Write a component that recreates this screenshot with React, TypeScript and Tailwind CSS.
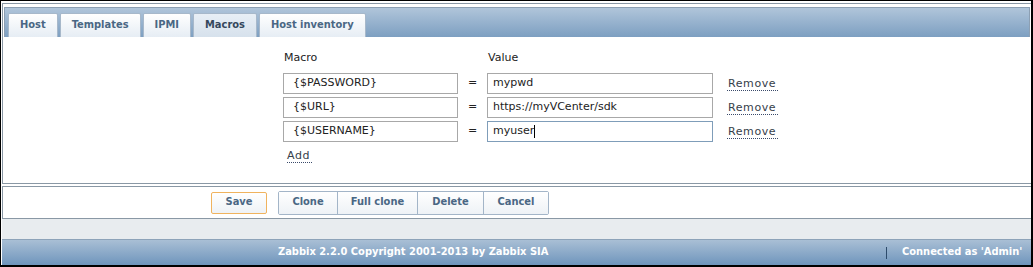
import React from "react";

const font = { fontFamily: '"DejaVu Sans Condensed", "DejaVu Sans", Verdana, sans-serif' };
const reg = { fontFamily: '"DejaVu Sans", Verdana, sans-serif' };

function Tab({ label, active }: { label: string; active?: boolean }) {
  return (
    <div
      className={
        "h-[24px] px-[11px] flex items-center border border-b-0 border-[#a7b8ca] rounded-t-[2px] text-[11px] font-bold " +
        (active
          ? "bg-gradient-to-b from-[#e8eff6] to-[#d6e1ec] text-[#34475c]"
          : "bg-gradient-to-b from-[#ffffff] to-[#e6edf4] text-[#4a6784]")
      }
    >
      {label}
    </div>
  );
}

function Row({ macro, value, focused }: { macro: string; value: string; focused?: boolean }) {
  return (
    <div className="flex items-center h-[21px]">
      <div className="w-[175px] h-[21px] border border-[#a8a8a8] bg-white flex items-center pl-[9px] text-[11px] text-[#222]">
        {macro}
      </div>
      <div className="w-[29px] text-center text-[11px] text-[#222]">=</div>
      <div
        className={
          "w-[226px] h-[21px] border bg-white flex items-center pl-[5px] text-[11px] text-[#222] " +
          (focused ? "border-[#7f9db9]" : "border-[#a8a8a8]")
        }
      >
        {value}
        {focused && <span className="inline-block w-[1px] h-[13px] bg-black" />}
      </div>
      <div className="ml-[14px] text-[11px] tracking-[0.6px] text-[#36404a] border-b border-dotted border-[#3a4a6a] leading-[13px] pt-[1px] pl-[1px] pr-[2px]">
        Remove
      </div>
    </div>
  );
}

function Btn({ label, className }: { label: string; className?: string }) {
  return (
    <div
      className={
        "h-[22px] flex items-center justify-center text-[11px] font-bold text-[#4a6784] bg-gradient-to-b from-[#ffffff] to-[#eef2f6] " +
        (className || "")
      }
    >
      {label}
    </div>
  );
}

export default function App() {
  return (
    <div style={font} className="w-[1033px] h-[267px] bg-black pl-[1px] pt-[1px] pr-[2px] pb-[2px]">
      <div className="w-full h-full bg-white flex flex-col">
        <div className="mt-[2px] ml-[1px] h-[181px] border-t border-l border-b border-[#8a98a5] flex flex-col">
          <div className="mt-[3px] ml-[1px] mr-[1px] h-[30px] border border-b-0 border-[#8c9fb3] bg-gradient-to-b from-[#b0c5da] to-[#7d9fc1] flex items-end pl-[3px] gap-[2px]">
            <Tab label="Host" />
            <Tab label="Templates" />
            <Tab label="IPMI" />
            <Tab label="Macros" active />
            <Tab label="Host inventory" />
          </div>
          <div style={reg} className="flex-1 pl-[280px] pt-[14px] flex flex-col">
            <div className="flex text-[11px] text-[#222] h-[14px] items-center">
              <div className="w-[204px] pl-[1px]">Macro</div>
              <div className="pl-[1px]">Value</div>
            </div>
            <div className="mt-[8px] flex flex-col gap-[3px]">
              <Row macro="{$PASSWORD}" value="mypwd" />
              <Row macro="{$URL}" value="https://myVCenter/sdk" />
              <Row macro="{$USERNAME}" value="myuser" focused />
            </div>
            <div className="mt-[6px] ml-[4px] self-start text-[11px] tracking-[0.6px] text-[#36404a] border-b border-dotted border-[#3a4a6a] leading-[13px] pt-[1px] pr-[2px]">
              Add
            </div>
          </div>
        </div>
        <div className="mt-[2px] ml-[1px] h-[33px] border-t border-l border-b border-[#8a98a5] flex items-center pl-[208px]">
          <Btn label="Save" className="w-[56px] border border-[#f0b35e] rounded-[2px]" />
          <div className="ml-[11px] flex border border-[#a3b5c8] rounded-[2px]">
            <Btn label="Clone" className="w-[59px] border-r border-[#a3b5c8]" />
            <Btn label="Full clone" className="w-[80px] border-r border-[#a3b5c8]" />
            <Btn label="Delete" className="w-[66px] border-r border-[#a3b5c8]" />
            <Btn label="Cancel" className="w-[64px]" />
          </div>
        </div>
        <div className="h-[20px] bg-[#e8ecef] ml-[1px]" />
        <div className="flex-1 ml-[1px] bg-gradient-to-b from-[#a9bfd5] to-[#6f95bc] border-t border-[#8da3b9] flex items-center text-[11px] font-bold text-white">
          <div className="ml-[276px] w-[608px]">Zabbix 2.2.0 Copyright 2001-2013 by Zabbix SIA</div>
          <div className="w-[1px] h-[12px] bg-[#2d4b6b]" />
          <div className="ml-[15px]">Connected as 'Admin'</div>
        </div>
      </div>
    </div>
  );
}
